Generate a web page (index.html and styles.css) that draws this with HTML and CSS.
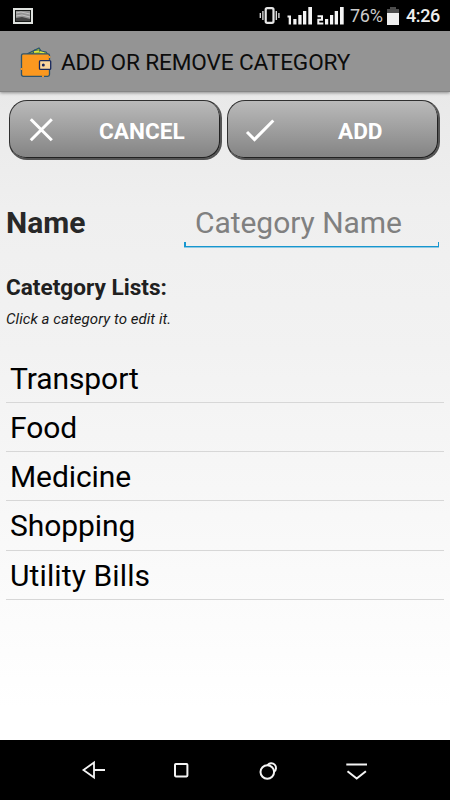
FILE: index.html
```html
<!DOCTYPE html>
<html lang="en">
<head>
<meta charset="utf-8">
<title>Add or Remove Category</title>
<link rel="stylesheet" href="styles.css">
</head>
<body>
<div class="screen">
  <header class="status">
    <svg class="status-photo" width="20" height="16" viewBox="0 0 20 16"><rect x="1" y="1" width="18" height="14" fill="#777" stroke="#dfe2df" stroke-width="2"/><rect x="2.500" y="2.500" width="15" height="11" fill="#929292" stroke="#171a18"/><path d="M3 5 8 4l9 2M3 8l6-1 8 2" fill="none" stroke="#c2c2c2"/><path d="M3 10l6-1 8 2v2H3z" fill="#444"/></svg>
    <svg class="status-icons" width="86" height="20" viewBox="0 0 86 20">
      <g fill="none" stroke="#e5e5e5"><rect x="7.700" y="2.200" width="7.800" height="14.600" rx="1.500" stroke-width="2.200"/><path d="M4.900 5v9M2.300 7v5M18.300 5v9M20.900 7v5" stroke-width="1.300"/></g>
      <g fill="#f4f4f4"><path d="M29.500 9.500H33v9h-2.300v-7h-1.200v-2z"/><path d="M35.300 13h3.200v5.500h-3.200zM40.300 9h3.300v9.500h-3.300zM45 5h3.300v13.500H45zM50.300 1h3.700v17.500h-3.700z"/><path d="M67 13h3.200v5.500H67zM72 9h3.200v9.500H72zM76.700 5H80v13.500h-3.300zM82 1h3.700v17.500H82z"/></g>
      <path d="M59.500 10.300H64v3.500h-3.700v3.700h5" fill="none" stroke="#f4f4f4" stroke-width="2"/>
    </svg>
    <span class="percent">76%</span>
    <svg class="battery" width="12" height="18" viewBox="0 0 12 18"><path d="M0 2h3V0h6v2h3v4H0z" fill="#4c4c4c"/><path d="M0 6h12v12H0z" fill="#eee"/></svg>
    <time>4:26</time>
  </header>

  <div class="appbar">
    <svg class="wallet" width="32" height="32" viewBox="0 0 32 32">
      <path d="M7 8 19 2l4 6z" fill="#8fae37" stroke="#28536d" stroke-width="1.200"/>
      <path d="M15 4l11 2 2 3H12z" fill="#a4c12d" stroke="#28536d" stroke-width="1.200"/>
      <path d="M14 6l5-1M20 6l4 1" stroke="#e2e83b" stroke-width="1.500"/>
      <rect x="1.500" y="7.800" width="28" height="22.500" rx="1.800" fill="#fb981f" stroke="#2d546d" stroke-width="1.300"/>
      <path d="M22 30.300h2M1.500 22v2M29.500 10v2" stroke="#fb981f" stroke-width="1.500"/>
      <rect x="19.500" y="14.600" width="11.200" height="8.800" rx="1" fill="#fbd59c" stroke="#17285d" stroke-width="1.300"/>
      <circle cx="23.300" cy="19" r="1.500" fill="#18245c"/>
    </svg>
    <h1>ADD OR REMOVE CATEGORY</h1>
  </div>

  <main>
    <div class="actions">
      <button class="btn cancel"><svg width="30" height="30" viewBox="0 0 30 30"><path d="M3.800 4.300l21 21M24.800 4.300l-21 21"/></svg><span>CANCEL</span></button>
      <button class="btn add"><svg width="30" height="30" viewBox="0 0 30 30"><path d="M2 17l7.500 7.500L28.300 5.500"/></svg><span>ADD</span></button>
    </div>

    <div class="field">
      <label for="name">Name</label>
      <div class="input-wrap"><input id="name" type="text" placeholder="Category Name"></div>
    </div>

    <h2>Catetgory Lists:</h2>
    <p class="hint">Click a category to edit it.</p>

    <ul class="list">
      <li><span>Transport</span></li>
      <li><span>Food</span></li>
      <li><span>Medicine</span></li>
      <li><span>Shopping</span></li>
      <li><span class="wide">Utility Bills</span></li>
    </ul>
  </main>

  <nav class="navbar">
    <svg width="88" height="60" viewBox="0 0 88 60"><path d="M34 22.500v15L23.500 30zM34 30h11"/></svg>
    <svg width="88" height="60" viewBox="0 0 88 60"><rect x="27" y="24" width="12.400" height="12.400" rx=".8"/></svg>
    <svg width="88" height="60" viewBox="0 0 88 60"><circle cx="31.300" cy="32" r="6.800"/><path d="M31.500 25.200a4.700 4.700 0 1 1 6.500 6.600"/></svg>
    <svg width="88" height="60" viewBox="0 0 88 60"><path d="M22.300 24.500H43M23.500 31.200l9.200 7.300 9.200-7.300"/></svg>
  </nav>
</div>
</body>
</html>
```

FILE: styles.css
```css
* { box-sizing: border-box; margin: 0; padding: 0; }
body { width: 450px; height: 800px; font-family: Roboto, sans-serif; background: #000; color: #000; overflow: hidden; }
svg { display: block; flex: none; }
.screen { height: 800px; display: flex; flex-direction: column; }

.status { height: 31px; flex: none; display: flex; align-items: center; padding: 1px 10px 0 13px; background: #000; color: #eee; }
.status-icons { margin-left: auto; margin-top: -1px; }
.percent { width: 33px; margin-left: 6px; font-size: 18px; letter-spacing: -0.3px; line-height: 30px; color: #ccc; white-space: nowrap; }
.battery { margin-left: 4px; }
time { width: 34px; margin-left: 7px; font-size: 18px; line-height: 30px; font-weight: 500; letter-spacing: -0.4px; white-space: nowrap; }

.appbar { height: 61px; flex: none; display: flex; align-items: center; padding-left: 20px; background: #949494; border-bottom: 1px solid #858585; box-shadow: 0 1px 3px #0006; position: relative; }
.wallet { margin-top: 2px; }
h1 { margin: 3px 0 0 9px; font-size: 22.6px; font-weight: 400; letter-spacing: -0.12px; line-height: 28px; white-space: nowrap; color: #0c0c0c; }

main { height: 648px; flex: none; padding: 8px 6px 0; background: linear-gradient(#e9e9e9, #efefef 18%, #f2f2f2 40%, #fff 95%); }
.actions { display: flex; gap: 5px; padding-left: 3px; }
.btn { width: 213px; height: 60px; display: flex; align-items: center; padding: 0 0 0 17px; border: 1px solid #303030; border-right: 2px solid #555; border-bottom: 2px solid #555; border-radius: 18px; background: linear-gradient(#bababa, #838383); box-shadow: inset -1px -1px 0 #222; color: #fff; font: 700 22.6px/28px Roboto, sans-serif; }
.btn svg { fill: none; stroke: #fff; stroke-width: 3; margin-top: 1px; }
.btn span { margin-top: 4px; white-space: nowrap; }
.cancel span { margin-left: 42px; }
.add span { margin-left: 63px; }

.field { display: flex; align-items: flex-start; margin-top: 42px; }
label { width: 178px; font-size: 30px; line-height: 42px; font-weight: 700; color: #282828; }
.input-wrap { width: 255px; height: 45px; padding-left: 11px; border-bottom: 1.5px solid #1696cf; box-shadow: 0 1px 0 #1696cf70; position: relative; }
.input-wrap::before, .input-wrap::after { content: ""; position: absolute; bottom: 0; width: 1.5px; height: 4px; background: #1696cf; }
.input-wrap::before { left: 0; }
.input-wrap::after { right: 0; }
input { display: block; width: 240px; height: 42px; border: 0; outline: 0; background: transparent; font: 400 30px/42px Roboto, sans-serif; letter-spacing: -0.05px; }
input::placeholder { color: #808080; opacity: 1; }
h2 { margin-top: 26px; font-size: 22.6px; line-height: 30px; color: #202020; }
.hint { margin-top: 7px; font-size: 15px; line-height: 18px; font-style: italic; letter-spacing: 0.06px; color: #181818; }
.list { list-style: none; margin-top: 25.5px; }
.list li { height: 49.3px; padding: 4px 4px 0; border-bottom: 1px solid #d7d7d7; font-size: 30px; line-height: 42px; letter-spacing: -0.08px; white-space: nowrap; }
.list .wide { letter-spacing: 0.12px; }

.navbar { height: 60px; display: flex; padding-left: 60px; background: #000; }
.navbar svg { fill: none; stroke: #f4f4f4; stroke-width: 2; }
.navbar svg:nth-child(1) { stroke-width: 1.8; }
```
